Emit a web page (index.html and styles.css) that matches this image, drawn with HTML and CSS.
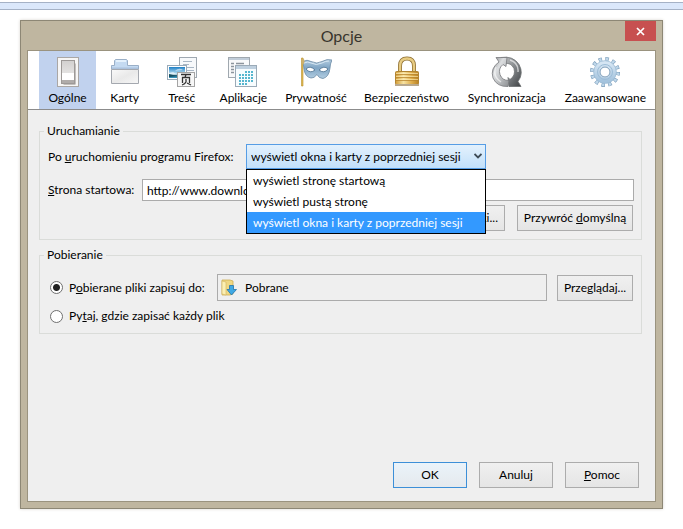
FILE: index.html
```html
<!DOCTYPE html>
<html lang="pl">
<head>
<meta charset="utf-8">
<title>Opcje</title>
<link rel="stylesheet" href="styles.css">
</head>
<body>
<div class="strip"></div>
<main class="dialog">
  <header class="titlebar">
    <h1 class="title">Opcje</h1>
    <button class="close" type="button" aria-label="Zamknij">
      <svg width="9" height="9" viewBox="0 0 9 9"><path d="M1 1l7 7M8 1l-7 7" stroke="#fff" stroke-width="1.7"/></svg>
    </button>
  </header>
  <div class="content">
    <nav class="tabs">
      <button class="tab active" type="button">
        <svg class="icon" viewBox="0 0 32 32">
          <defs><linearGradient id="sw" x2="0" y2="1"><stop stop-color="#d2d0cf"/><stop offset="1" stop-color="#f2f1f0"/></linearGradient></defs>
          <rect x="5.500" y="1.500" width="21" height="29" fill="#f7f6f5" stroke="#aaa7a5"/>
          <path d="M11 28h12V7l1 1v20l-1 1H12z" fill="#c3c0be"/>
          <rect x="9.500" y="4.500" width="13" height="23" fill="url(#sw)" stroke="#9d9997"/>
          <rect x="10" y="17" width="12" height="7" fill="#fff"/>
          <rect x="10" y="24" width="12" height="3" fill="#b0acaa"/>
        </svg>
        <span>Ogólne</span>
      </button>
      <button class="tab" type="button">
        <svg class="icon" viewBox="0 0 32 32">
          <defs><linearGradient id="fo" x2="1" y2="1"><stop stop-color="#fafafa"/><stop offset=".5" stop-color="#e9e9e9"/><stop offset="1" stop-color="#f7f7f7"/></linearGradient></defs>
          <path d="M2.500 13V9.500h3V4.500l1-1h11l1 1v5h11V13z" fill="#c4daf1" stroke="#9aafc7"/>
          <path d="M7 5h10" stroke="#e4f1fc" stroke-width="2"/>
          <path d="M2.500 13.500h27v14h-27z" fill="url(#fo)" stroke="#a4a8af"/>
          <path d="M3 12h26" stroke="#a9c0dc"/>
        </svg>
        <span>Karty</span>
      </button>
      <button class="tab" type="button">
        <svg class="icon" viewBox="0 0 32 32">
          <defs><linearGradient id="sky" x2="0" y2="1"><stop stop-color="#1f80c6"/><stop offset=".65" stop-color="#c5e7f6"/><stop offset=".7" stop-color="#23647c"/><stop offset="1" stop-color="#3c9cc5"/></linearGradient></defs>
          <rect x="13.500" y="1.500" width="17" height="20" fill="#f7f9fb" stroke="#9fa8b1"/>
          <path d="M17 5.500h9M17 8.500h6M20 11.500h8M21 14.500h7" stroke="#aab7c5"/>
          <rect x="1.500" y="9.500" width="19" height="14" fill="#fff" stroke="#9aabb9"/>
          <rect x="3" y="11" width="16" height="11" fill="url(#sky)"/>
          <path d="M3 17l4-1 5 3H3zM9 15q4-4 8-1z" fill="#fff" opacity=".55"/><path d="M3 18l4 1 5 1-9 1z" fill="#174f61"/>
          <rect x="11.500" y="16.500" width="17" height="14" fill="#f7f7f7" stroke="#a4a4a4"/>
          <path d="M15 18.500h10M20 18.500l-1 3M16.500 27v-5.500h7V27M20 23v3q-1 2-4 3M21 27l4 2" fill="none" stroke="#333" stroke-width="1.300"/>
        </svg>
        <span>Treść</span>
      </button>
      <button class="tab" type="button">
        <svg class="icon" viewBox="0 0 32 32">
          <rect x="1.500" y="1.500" width="21" height="20" fill="#f8f9fa" stroke="#a0a8af"/>
          <path d="M2 3h20" stroke="#c1cdd9" stroke-width="2"/>
          <path d="M4 7.500h3M9 7.500h8M4 10.500h3M4 13.500h3M4 16.500h3" stroke="#8c959d" stroke-width="1.500"/>
          <rect x="8.500" y="9.500" width="21" height="21" fill="#f7fcfe" stroke="#9baab7"/>
          <path d="M9 11.500h20" stroke="#bfd0df" stroke-width="3"/>
          <path d="M18 16h9M12 19h15M12 22h15M12 25h15M12 28h9" stroke="#56b6cf" stroke-width="2" stroke-dasharray="2 1"/>
        </svg>
        <span>Aplikacje</span>
      </button>
      <button class="tab" type="button">
        <svg class="icon" viewBox="0 0 32 32">
          <defs><linearGradient id="ma" x2="0" y2="1"><stop stop-color="#b3cce0"/><stop offset=".45" stop-color="#7fa5c4"/><stop offset="1" stop-color="#b3cee2"/></linearGradient></defs>
          <path d="M1.500 2h1.500v28H1.500z" fill="#e2bc55" stroke="#b98e2a" stroke-width=".6"/>
          <path d="M3 5.500Q7 3 11 5.500q6 3 11 0 5-3 10-1.500-2 4-2 8-1 9-7 10.500-4 0-6-4-3 4-6 3.500-6-1-7-9z" fill="url(#ma)" stroke="#6b8aa5" stroke-width=".8"/>
          <path d="M4 7q4-2 7 0 5 3 11 0 3-2 7-2" fill="none" stroke="#d8e8f3"/>
          <path d="M6 13q4-4 9 1-5 4-9-1zM19 14q5-5 9-1-4 5-9 1z" fill="#fff" stroke="#4d718f" stroke-width=".8"/>
          <path d="M3 2q3 3 0 7-3-3 0-7z" fill="#cbb06d"/>
        </svg>
        <span>Prywatność</span>
      </button>
      <button class="tab" type="button">
        <svg class="icon" viewBox="0 0 32 32">
          <defs><linearGradient id="lo"><stop stop-color="#d29c36"/><stop offset=".35" stop-color="#f7e3a3"/><stop offset=".7" stop-color="#dfae4c"/><stop offset="1" stop-color="#b98225"/></linearGradient></defs>
          <path d="M9 17V10q0-7.500 7-7.500t7 7.500v7" fill="none" stroke="#8c6d31" stroke-width="4"/>
          <path d="M9 17V10q0-7.500 7-7.500t7 7.500v7" fill="none" stroke="#e7cb82" stroke-width="2.500"/>
          <rect x="4.500" y="15.500" width="23" height="13" rx="1" fill="url(#lo)" stroke="#b38531"/>
          <path d="M5 18.500h22M5 21.500h22M5 24.500h22" stroke="#b8842c" opacity=".75"/>
          <path d="M5 17.500h22M5 20.500h22M5 23.500h22" stroke="#fff0b9" opacity=".6"/>
          <path d="M4 28h24v2H4z" fill="#b9a98e"/>
        </svg>
        <span>Bezpieczeństwo</span>
      </button>
      <button class="tab" type="button">
        <svg class="icon" viewBox="0 0 32 32">
          <defs><linearGradient id="sy" x2="1" y2="1"><stop stop-color="#7c7f82"/><stop offset=".35" stop-color="#dcdee0"/><stop offset="1" stop-color="#8d9093"/></linearGradient><linearGradient id="sz" x2="1" y2="1"><stop stop-color="#caccce"/><stop offset=".55" stop-color="#7d8184"/><stop offset="1" stop-color="#3f4244"/></linearGradient></defs>
          <path d="M10 1.500q12-2 18 7 5 9-1 17l3 5H18l-1-9 2 2q6-4 4-11-3-6-9-5z" fill="url(#sz)" stroke="#6b6e70" stroke-width=".8"/>
          <path d="M5 1.500h11l-1 9-3-2q-5 4-3 10 2 6 9 6l-1 6Q6 31 2 22-1 12 8 6z" fill="url(#sy)" stroke="#77797c" stroke-width=".8"/>
          <path d="M5 11q-4 9 5 15M19 4q9 3 8 12" fill="none" stroke="#fff" stroke-width="1.500" opacity=".6"/>
        </svg>
        <span>Synchronizacja</span>
      </button>
      <button class="tab" type="button">
        <svg class="icon" viewBox="0 0 32 32">
          <defs><linearGradient id="ge" x2="0" y2="1"><stop stop-color="#d5e5f3"/><stop offset="1" stop-color="#a5c4de"/></linearGradient></defs>
          <circle cx="16" cy="16" r="13" fill="none" stroke="#7598b6" stroke-width="4" stroke-dasharray="3.400 3.407"/>
          <circle cx="16" cy="16" r="13" fill="none" stroke="#bfd7ea" stroke-width="3" stroke-dasharray="2.400 4.407" stroke-dashoffset="-.5"/>
          <circle cx="16" cy="16" r="8.500" fill="none" stroke="url(#ge)" stroke-width="6"/>
          <circle cx="16" cy="16" r="11.300" fill="none" stroke="#9bbad3" stroke-width=".7"/>
          <circle cx="16" cy="16" r="7.500" fill="none" stroke="#9dbdd7"/>
          <circle cx="16" cy="16" r="5" fill="#fff" stroke="#7598b6"/>
        </svg>
        <span>Zaawansowane</span>
      </button>
    </nav>
    <form class="pane">
      <fieldset class="group startup">
        <legend>Uruchamianie</legend>
        <div class="row">
          <label for="start">Po <u>u</u>ruchomieniu programu Firefox:</label>
          <div class="combo">
            <select id="start">
              <option>wyświetl stronę startową</option>
              <option>wyświetl pustą stronę</option>
              <option selected>wyświetl okna i karty z poprzedniej sesji</option>
            </select>
            <svg class="arrow" width="8" height="6" viewBox="0 0 8 6"><path d="M.5 1L4 4.500 7.500 1" fill="none" stroke="#3d4a55" stroke-width="1.800"/></svg>
            <ul class="menu" role="listbox" aria-label="Po uruchomieniu">
              <li role="option">wyświetl stronę startową</li>
              <li role="option">wyświetl pustą stronę</li>
              <li role="option" class="chosen" aria-selected="true">wyświetl okna i karty z poprzedniej sesji</li>
            </ul>
          </div>
        </div>
        <div class="row home">
          <label class="home-label" for="home"><u>S</u>trona startowa:</label>
          <input id="home" class="text" type="text" value="http://www.download.pl/">
        </div>
        <div class="row actions">
          <button class="btn" type="button">Użyj zakładki...</button>
          <button class="btn restore" type="button">Przywróć <u>d</u>omyślną</button>
        </div>
      </fieldset>
      <fieldset class="group downloads">
        <legend>Pobieranie</legend>
        <div class="row">
          <input class="radio" type="radio" name="save" id="save-to" checked>
          <label class="save-label" for="save-to">P<u>o</u>bierane pliki zapisuj do:</label>
          <div class="path">
            <svg width="16" height="17" viewBox="0 0 16 17">
              <path d="M1 1h8l3 1v13l-3 1H1z" fill="#efd884" stroke="#cfaf54" stroke-width=".8"/>
              <path d="M1 2l4 1v13l-4-1z" fill="#fbefb3" stroke="#d1b45f" stroke-width=".6"/>
              <path d="M8.500 6.500h4v4h3L10.500 16 6 10.500h2.500z" fill="#3fa9e4" stroke="#2174ad" stroke-width=".8"/>
            </svg>
            <span>Pobrane</span>
          </div>
          <button class="btn browse" type="button">Prze<u>g</u>lądaj...</button>
        </div>
        <div class="row ask">
          <input class="radio" type="radio" name="save" id="ask">
          <label for="ask">Py<u>t</u>aj, gdzie zapisać każdy plik</label>
        </div>
      </fieldset>
      <footer class="footer">
        <button class="btn default" type="button">OK</button>
        <button class="btn" type="button">Anuluj</button>
        <button class="btn" type="button"><u>P</u>omoc</button>
      </footer>
    </form>
  </div>
</main>
</body>
</html>
```
FILE: styles.css
```css
* { box-sizing: border-box; }

body {
  margin: 0;
  min-height: 100vh;
  display: flex;
  flex-direction: column;
  background: #fff;
  color: #000;
  font: 12px/16px Lato, "Open Sans", sans-serif;
}

button, input, select { font: inherit; color: inherit; }

.strip {
  height: 8px;
  margin-top: 2px;
  background: #dbe8fb;
  border: solid #a5b2c6;
  border-width: 1px 0;
}

.dialog {
  flex: 1;
  display: flex;
  flex-direction: column;
  margin: 10px 20px 20px;
  padding: 0 6px 6px;
  background: #bfb6a0;
  border: 1px solid #8d8775;
  box-shadow: 0 0 3px #d8d6d0;
}

.titlebar {
  position: relative;
  height: 29px;
}

.title {
  margin: 0;
  text-align: center;
  font-size: 16px;
  font-weight: 400;
  line-height: 29px;
  color: #37342d;
}

.close {
  position: absolute;
  top: 0;
  right: 0;
  display: flex;
  align-items: center;
  justify-content: center;
  width: 31px;
  height: 20px;
  padding: 0;
  border: 0;
  background: #c75050;
}

.content {
  flex: 1;
  display: flex;
  flex-direction: column;
  border: 1px solid #9a937f;
  background: #efefef;
}

.tabs {
  display: grid;
  grid-template-columns: 57fr 57fr 57fr 66fr 79fr 102fr 98fr 99fr;
  height: 59px;
  padding: 0 0 0 11px;
  background: #fff;
  border-bottom: 1px solid #8c8c8c;
}

.tab {
  display: flex;
  flex-direction: column;
  align-items: center;
  gap: 2px;
  min-width: 0;
  padding: 5px 0 0;
  border: 0;
  background: none;
  white-space: nowrap;
}

.tab.active { background: #c1d2ee; }

.icon {
  width: 32px;
  height: 32px;
  flex: none;
}

.pane {
  flex: 1;
  display: flex;
  flex-direction: column;
  padding: 13px 13px 13px 11px;
}

.group {
  min-width: 0;
  margin: 0;
  border: 1px solid #dadcd9;
}

.group legend {
  margin-left: -4px;
  padding: 0 3px;
}

.startup { padding: 5px 7px 8px 8px; }

.downloads {
  margin-top: 7px;
  padding: 11px 8px 9px 8px;
}

.row {
  display: flex;
  align-items: center;
  white-space: nowrap;
}

.combo {
  position: relative;
  width: 240px;
  margin-left: auto;
  margin-right: 148px;
}

.combo select {
  display: block;
  appearance: none;
  width: 100%;
  height: 25px;
  padding: 0 4px;
  border: 1px solid #569de5;
  border-radius: 0;
  background: linear-gradient(#e3f1fd, #c2e0fa);
}

.arrow {
  position: absolute;
  top: 9px;
  right: 4px;
}

.menu {
  position: absolute;
  z-index: 1;
  top: 25px;
  left: 0;
  right: 0;
  margin: 0;
  padding: 0;
  list-style: none;
  background: #fff;
  border: 1px solid #000;
}

.menu li {
  padding: 0 6px;
  line-height: 21px;
}

.menu .chosen {
  background: #3399ff;
  color: #fff;
}

.home { margin-top: 10px; }

.home-label { width: 94px; }

.text {
  flex: 1;
  min-width: 0;
  height: 22px;
  padding: 0 4px;
  border: 1px solid #ababab;
  background: #fff;
}

.actions {
  justify-content: flex-end;
  gap: 12px;
  margin-top: 4px;
  padding-right: 1px;
}

.btn {
  height: 26px;
  padding: 0 6px;
  border: 1px solid #acacac;
  border-radius: 0;
  background: linear-gradient(#f0f0f0, #e5e5e5);
  white-space: nowrap;
}

.restore { width: 116px; padding: 0; }

.radio {
  appearance: none;
  width: 13px;
  height: 13px;
  margin: 0 6px 0 2px;
  border: 1px solid #707070;
  border-radius: 50%;
  background: #fff;
}

.radio:checked {
  background: radial-gradient(circle, #222 3px, #fff 4px);
}

.save-label { width: 148px; }

.path {
  flex: 1;
  display: flex;
  align-items: center;
  gap: 8px;
  height: 27px;
  padding: 0 3px;
  border: 1px solid #ababab;
}

.browse {
  width: 76px;
  margin-left: 10px;
  padding: 0;
}

.ask { margin-top: 7px; }

.footer {
  display: flex;
  justify-content: flex-end;
  gap: 12px;
  margin-top: auto;
  padding-right: 3px;
}

.footer .btn { width: 74px; }

.footer .default {
  border-color: #3c8fd8;
  background: linear-gradient(#eaf3fa, #e5e9ed);
}
```
